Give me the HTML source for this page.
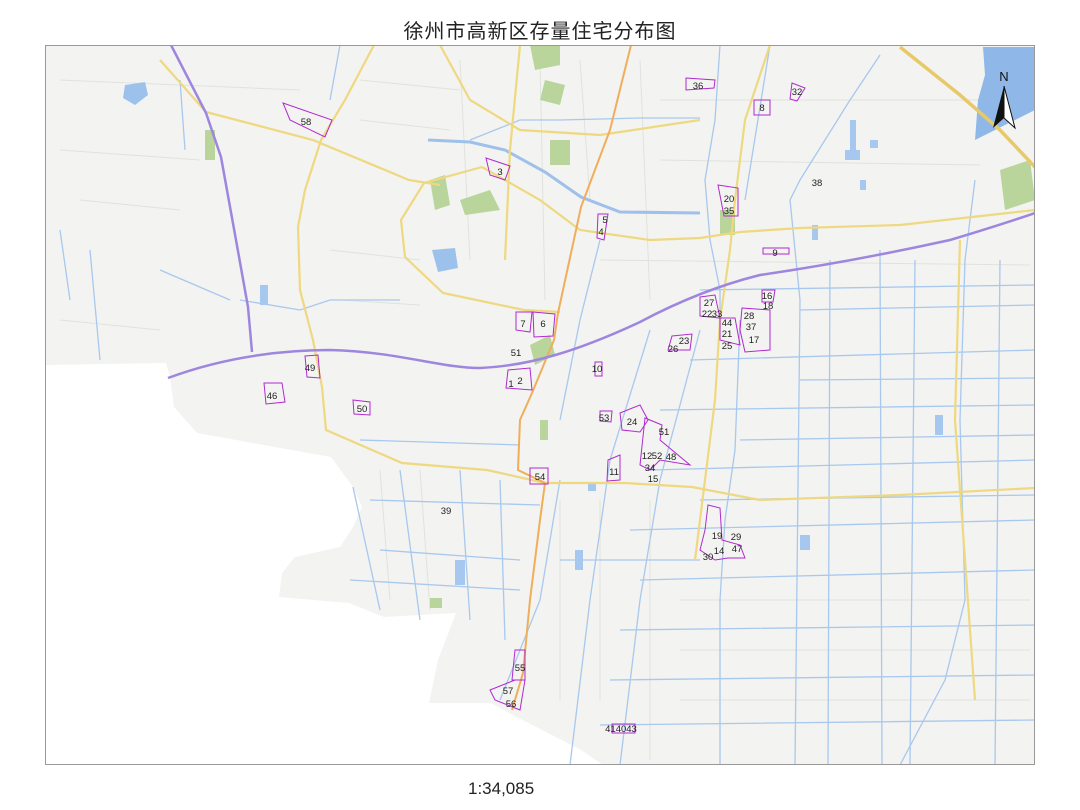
<!DOCTYPE html>
<html><head><meta charset="utf-8">
<style>
html,body{margin:0;padding:0;background:#fff;width:1080px;height:810px;overflow:hidden;font-family:"Liberation Sans","Noto Sans CJK SC",sans-serif;}
.t{position:absolute;left:0;width:1080px;top:15px;text-align:center;font-size:20px;color:#222;letter-spacing:1px;font-family:"Liberation Sans","Noto Sans CJK SC",sans-serif;}
.s{position:absolute;left:468px;top:779px;font-size:17px;color:#222;}
svg{position:absolute;left:0;top:0}
</style></head><body>
<div class="t">徐州市高新区存量住宅分布图</div>
<svg width="1080" height="810" viewBox="0 0 1080 810">
<defs><clipPath id="c"><rect x="45" y="45" width="990" height="720"/></clipPath></defs>
<g clip-path="url(#c)">
<rect x="45" y="45" width="990" height="720" fill="#f3f3f1"/>
<!-- minor roads texture -->
<g stroke="#e2e2dc" stroke-width="1" fill="none">
<path d="M60,80 L300,90 M60,150 L200,160 M80,200 L180,210 M60,320 L160,330 M360,80 L460,90 M360,120 L450,130 M330,250 L420,260 M340,300 L420,305 M460,60 L470,260 M540,60 L545,300 M580,60 L590,200 M640,60 L650,300 M660,100 L1000,100 M660,160 L980,165 M600,260 L1030,265 M380,470 L390,600 M420,470 L430,610 M560,500 L560,700 M600,500 L600,700 M650,500 L650,760 M680,600 L1030,600 M680,650 L1030,650 M680,700 L1030,700"/>
</g>
<!-- water -->
<path d="M983,47 L1035,47 L1035,110 L995,130 L975,140 L978,100 L985,75 Z" fill="#8fb8e8"/>
<path d="M125,85 L145,82 L148,95 L135,105 L123,98 Z" fill="#9cc2ec"/>
<path d="M432,250 L455,248 L458,268 L438,272 Z" fill="#9cc2ec"/>
<path d="M935,415h8v20h-8zM812,225h6v15h-6zM455,560h10v25h-10zM260,285h8v20h-8zM588,483h8v8h-8zM845,150h15v10h-15zM575,550h8v20h-8zM800,535h10v15h-10zM850,120h6v30h-6zM860,180h6v10h-6zM870,140h8v8h-8z" fill="#a6c8ee"/>
<!-- greens -->
<path d="M530,45 L560,45 L560,65 L535,70 Z M545,80 l20,5 l-5,20 l-20,-5z M430,180 l15,-5 l5,30 l-15,5z M460,200 l30,-10 l10,20 l-35,5z M550,140 l20,0 l0,25 l-20,0z M720,210 l15,0 l0,25 l-15,0z M530,345 l20,-10 l5,20 l-20,10z M1000,170 l30,-10 l5,40 l-30,10z M205,130 l10,0 l0,30 l-10,0z M430,598 h12v10h-12z M540,420 h8v20h-8z" fill="#b9d59c"/>
<!-- white outside area -->
<path d="M45,365 L166,363 L170,377 L174,407 L197,433 L331,457 L353,487 L362,507 L353,527 L340,547 L295,557 L282,573 L279,597 L349,603 L384,617 L456,613 L438,660 L429,703 L491,703 L509,713 L581,750 L603,765 L45,765 Z" fill="#fff"/>
<!-- canals -->
<g stroke="#a8c8ee" stroke-width="1.3" fill="none">
<path d="M770,45 L745,200"/>
<path d="M720,45 L715,120 L705,180 L710,240 L720,290 L720,330"/>
<path d="M740,320 L735,450 L725,520 L720,600 L720,765"/>
<path d="M700,330 L660,480 L640,600 L620,765"/>
<path d="M650,330 L610,460 L590,600 L570,765"/>
<path d="M560,480 L540,600 L500,700"/>
<path d="M600,240 L580,320 L560,420"/>
<path d="M790,200 L800,180 L850,100 L880,55"/>
<path d="M790,200 L800,300 L795,765"/>
<path d="M830,260 L828,765 M880,250 L882,765 M915,260 L910,765"/>
<path d="M975,180 L965,260 L960,420 L965,600 L945,680 L900,765"/>
<path d="M1000,260 L995,765"/>
<path d="M700,290 L1035,285 M690,360 L1035,350 M660,410 L1035,405 M650,470 L1035,460 M630,530 L1035,520 M640,580 L1035,570 M620,630 L1035,625 M610,680 L1035,675 M600,725 L1035,720"/>
<path d="M800,310 L1035,305 M800,380 L1035,378 M740,440 L1035,435 M700,500 L1035,495 M560,560 L700,560 M360,440 L520,445 M370,500 L540,505 M380,550 L520,560 M350,580 L520,590"/>
<path d="M353,487 L380,610 M400,470 L420,620 M460,470 L470,620 M500,480 L505,640 M240,300 L300,310 L330,300 L400,300 M160,270 L230,300"/>
<path d="M60,230 L70,300 M90,250 L100,360 M180,80 L185,150 M330,100 L340,45"/>
<path d="M470,140 L520,120 L560,120 L640,118 L700,118"/>
</g>
<g stroke="#9ec0ea" stroke-width="3" fill="none"><path d="M428,140 L470,142 L505,150 L545,172 L581,197 L620,212 L700,213"/></g>
<!-- yellow/green roads -->
<g stroke="#eed880" stroke-width="2.2" fill="none">
<path d="M374,45 L345,100 L321,140 L305,190 L298,227 L300,290 L313,340 L322,387 L326,430 L402,463 L487,470 L545,483 L625,483 L692,487 L760,500 L900,495 L1035,488"/>
<path d="M160,60 L206,112 L313,140 L409,180 L440,185"/>
<path d="M482,167 L424,183 L401,220 L405,257 L443,293 L524,310 L560,312"/>
<path d="M440,45 L470,100 L520,130 L600,135 L700,120"/>
<path d="M482,167 L540,200 L580,230 L650,240 L700,238 L740,232 L800,228 L900,225 L1035,210"/>
<path d="M770,45 L745,120 L735,200 L730,250 L720,320 L715,400 L705,480 L695,560"/>
<path d="M960,240 L955,420 L965,560 L975,700"/>
<path d="M520,45 L510,150 L505,260"/>
</g>
<g stroke="#e8c96a" stroke-width="3.5" fill="none"><path d="M900,47 L960,95 L1000,130 L1035,167"/></g>
<!-- orange -->
<g stroke="#f0ae5a" stroke-width="2" fill="none"><path d="M631,45 L610,130 L581,207 L558,313 L554,340 L532,393 L520,420 L518,470 L545,483 L540,520 L530,600 L523,673 L512,710"/></g>
<!-- purple highways -->
<g stroke="#9e86de" stroke-width="2.5" fill="none">
<path d="M171,45 L206,113 L221,157 L236,240 L248,307 L252,352"/>
<path d="M168,378 C230,355 290,350 330,350 C400,352 440,368 480,368 C530,366 580,350 640,322 Q700,290 760,275 Q850,262 950,240 Q1000,225 1035,213"/>
</g>
<!-- parcels -->
<g stroke="#b02ad0" stroke-width="1" fill="none">
<path d="M283,103 L332,120 L325,137 L290,120 Z"/>
<path d="M486,158 L510,166 L505,180 L490,175 Z"/>
<path d="M598,214 L608,214 L604,240 L597,238 Z"/>
<path d="M686,78 L715,80 L714,88 L686,90 Z"/>
<path d="M754,100 L770,100 L770,115 L754,115 Z"/>
<path d="M792,83 L805,88 L797,101 L790,99 Z"/>
<path d="M718,185 L738,188 L738,216 L724,216 Z"/>
<path d="M763,248 L789,248 L789,254 L763,254 Z"/>
<path d="M700,297 L715,295 L720,318 L700,316 Z"/>
<path d="M762,290 L775,290 L773,302 L762,302 Z"/>
<path d="M742,308 L770,310 L770,350 L745,352 L740,330 Z"/>
<path d="M720,318 L735,318 L740,345 L720,340 Z"/>
<path d="M672,336 L692,334 L690,350 L668,350 Z"/>
<path d="M516,312 L532,312 L530,332 L516,330 Z M533,312 L555,314 L553,336 L534,337 Z"/>
<path d="M508,370 L530,368 L532,390 L506,388 Z"/>
<path d="M595,362 L602,362 L602,376 L595,376 Z"/>
<path d="M305,356 L318,355 L320,378 L307,377 Z"/>
<path d="M264,383 L282,383 L285,402 L266,404 Z"/>
<path d="M353,400 L370,402 L370,415 L354,414 Z"/>
<path d="M600,411 L612,411 L611,422 L600,421 Z"/>
<path d="M620,413 L640,405 L648,420 L640,432 L622,430 Z M645,418 L662,425 L660,440 L690,465 L660,460 L650,470 L640,465 Z"/>
<path d="M608,460 L620,455 L620,480 L607,481 Z"/>
<path d="M530,468 L548,468 L548,484 L530,484 Z"/>
<path d="M708,505 L720,508 L722,540 L740,545 L745,558 L728,558 L715,560 L700,550 L705,530 Z"/>
<path d="M515,650 L525,650 L525,680 L512,680 Z"/>
<path d="M490,690 L515,680 L525,680 L520,710 L495,700 Z"/>
<path d="M612,724 L635,724 L635,733 L612,733 Z"/>
</g>
<g font-family="Liberation Sans,sans-serif" font-size="9.5" fill="#222" text-anchor="middle">
<text x="306" y="125">58</text><text x="500" y="175">3</text><text x="605" y="223">5</text><text x="601" y="235">4</text>
<text x="698" y="89">36</text><text x="762" y="111">8</text><text x="797" y="95">32</text><text x="817" y="186">38</text>
<text x="729" y="202">20</text><text x="729" y="214">35</text><text x="775" y="256">9</text><text x="709" y="306">27</text>
<text x="707" y="317">22</text><text x="717" y="317">33</text><text x="767" y="299">16</text><text x="768" y="309">18</text>
<text x="749" y="319">28</text><text x="727" y="326">44</text><text x="751" y="330">37</text><text x="727" y="337">21</text>
<text x="754" y="343">17</text><text x="727" y="349">25</text><text x="684" y="344">23</text><text x="673" y="352">26</text>
<text x="523" y="327">7</text><text x="543" y="327">6</text><text x="516" y="356">51</text><text x="520" y="384">2</text>
<text x="511" y="387">1</text><text x="597" y="372">10</text><text x="310" y="371">49</text><text x="272" y="399">46</text>
<text x="362" y="412">50</text><text x="604" y="421">53</text><text x="632" y="425">24</text><text x="664" y="435">51</text>
<text x="647" y="459">12</text><text x="657" y="459">52</text><text x="671" y="460">48</text><text x="650" y="471">34</text>
<text x="653" y="482">15</text><text x="614" y="475">11</text><text x="540" y="480">54</text><text x="446" y="514">39</text>
<text x="717" y="539">19</text><text x="736" y="540">29</text><text x="719" y="554">14</text><text x="737" y="552">47</text>
<text x="708" y="560">30</text><text x="520" y="671">55</text><text x="508" y="694">57</text><text x="511" y="707">56</text>
<text x="621" y="732">414043</text>
</g>
<!-- north arrow -->
<text x="1004" y="81" font-family="Liberation Sans,sans-serif" font-size="13" fill="#111" text-anchor="middle">N</text>
<path d="M1004,86 L993,128 L1004,118 Z" fill="#111"/>
<path d="M1004,86 L1015,128 L1004,118 Z" fill="#fff" stroke="#111" stroke-width="1"/>
</g>
<rect x="45.5" y="45.5" width="989" height="719" fill="none" stroke="#999" stroke-width="1"/>
</svg>
<div class="s">1:34,085</div>
</body></html>
